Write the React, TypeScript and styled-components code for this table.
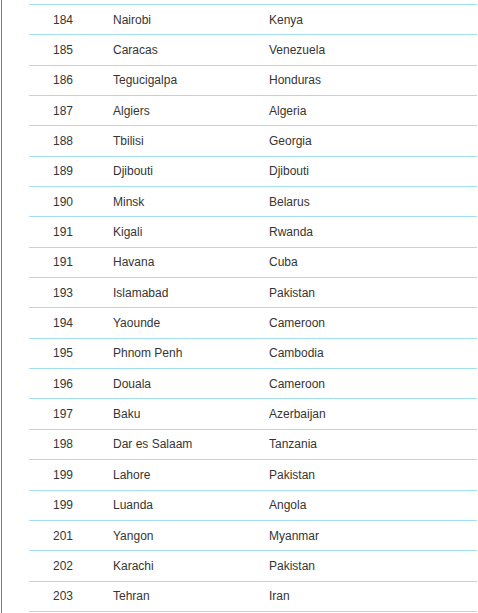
import React from 'react';
import styled, { createGlobalStyle } from 'styled-components';

interface City {
  rank: number;
  city: string;
  country: string;
}

const cities: City[] = [
  { rank: 184, city: 'Nairobi', country: 'Kenya' },
  { rank: 185, city: 'Caracas', country: 'Venezuela' },
  { rank: 186, city: 'Tegucigalpa', country: 'Honduras' },
  { rank: 187, city: 'Algiers', country: 'Algeria' },
  { rank: 188, city: 'Tbilisi', country: 'Georgia' },
  { rank: 189, city: 'Djibouti', country: 'Djibouti' },
  { rank: 190, city: 'Minsk', country: 'Belarus' },
  { rank: 191, city: 'Kigali', country: 'Rwanda' },
  { rank: 191, city: 'Havana', country: 'Cuba' },
  { rank: 193, city: 'Islamabad', country: 'Pakistan' },
  { rank: 194, city: 'Yaounde', country: 'Cameroon' },
  { rank: 195, city: 'Phnom Penh', country: 'Cambodia' },
  { rank: 196, city: 'Douala', country: 'Cameroon' },
  { rank: 197, city: 'Baku', country: 'Azerbaijan' },
  { rank: 198, city: 'Dar es Salaam', country: 'Tanzania' },
  { rank: 199, city: 'Lahore', country: 'Pakistan' },
  { rank: 199, city: 'Luanda', country: 'Angola' },
  { rank: 201, city: 'Yangon', country: 'Myanmar' },
  { rank: 202, city: 'Karachi', country: 'Pakistan' },
  { rank: 203, city: 'Tehran', country: 'Iran' },
];

const GlobalStyle = createGlobalStyle`
  html, body {
    margin: 0;
    padding: 0;
    background: #fff;
  }
  body {
    font-family: "Liberation Sans", Arial, sans-serif;
    color: #333;
  }
`;

const Page = styled.div`
  margin-left: 1px;
  border-left: 1px solid #1b9bd1;
  padding: 4px 1px 2px 27px;
  min-height: 607px;
`;

const Table = styled.div`
  border-bottom: 1px solid #a2dff0;
`;

const Row = styled.div`
  box-sizing: border-box;
  height: 30.35px;
  display: grid;
  grid-template-columns: 84px 156px 1fr;
  align-items: center;
  border-top: 1px solid #a2dff0;
  font-size: 12px;
  color: #353535;
`;

const Cell = styled.div<{ $pad?: number }>`
  padding-left: ${(p) => p.$pad ?? 0}px;
  white-space: nowrap;
`;

const App: React.FC = () => (
  <>
    <GlobalStyle />
    <Page>
      <Table>
        {cities.map((c, i) => (
          <Row key={i}>
            <Cell $pad={24}>{c.rank}</Cell>
            <Cell>{c.city}</Cell>
            <Cell>{c.country}</Cell>
          </Row>
        ))}
      </Table>
    </Page>
  </>
);

export default App;
